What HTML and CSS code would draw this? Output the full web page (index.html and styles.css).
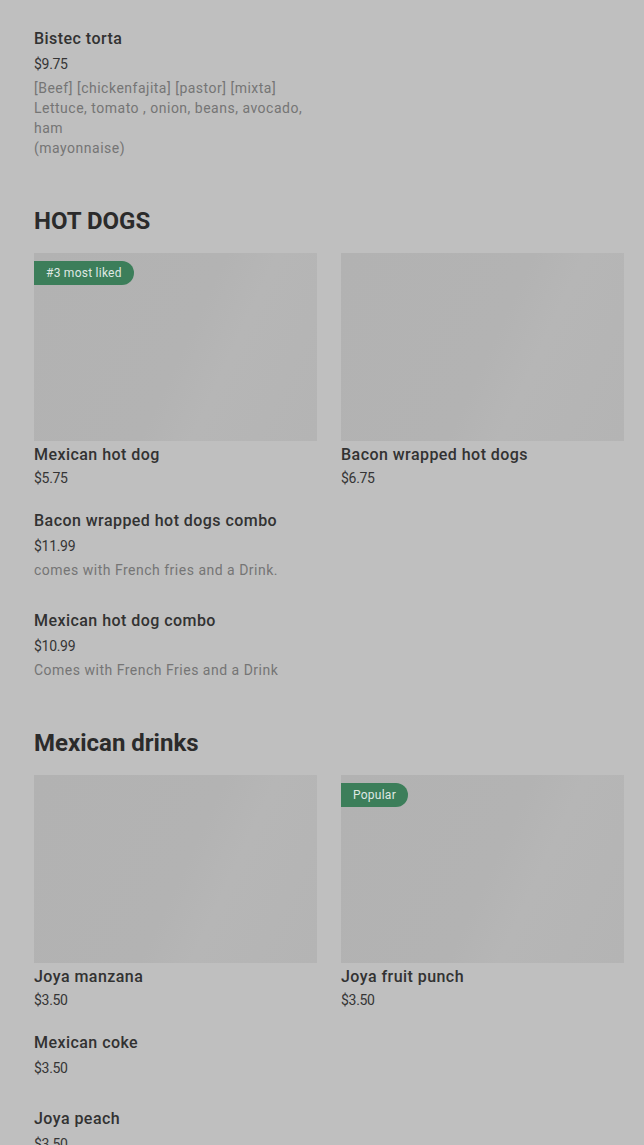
FILE: index.html
```html
<!DOCTYPE html>
<html lang="en">
<head>
<meta charset="utf-8">
<title>Menu</title>
<link rel="stylesheet" href="styles.css">
</head>
<body>
<main class="menu">
  <section class="section first">
    <div class="list">
      <div class="item">
        <div class="name">Bistec torta</div>
        <div class="price">$9.75</div>
        <div class="desc">[Beef] [chickenfajita] [pastor] [mixta]<br>Lettuce, tomato , onion, beans, avocado, ham<br>(mayonnaise)</div>
      </div>
    </div>
  </section>

  <section class="section">
    <h2 class="heading">HOT DOGS</h2>
    <div class="grid">
      <div class="card">
        <div class="thumb"><span class="badge">#3 most liked</span></div>
        <div class="card-name">Mexican hot dog</div>
        <div class="card-price">$5.75</div>
      </div>
      <div class="card">
        <div class="thumb"></div>
        <div class="card-name">Bacon wrapped hot dogs</div>
        <div class="card-price">$6.75</div>
      </div>
    </div>
    <div class="list">
      <div class="item">
        <div class="name">Bacon wrapped hot dogs combo</div>
        <div class="price">$11.99</div>
        <div class="desc">comes with French fries and a Drink.</div>
      </div>
      <div class="item">
        <div class="name">Mexican hot dog combo</div>
        <div class="price">$10.99</div>
        <div class="desc">Comes with French Fries and a Drink</div>
      </div>
    </div>
  </section>

  <section class="section">
    <h2 class="heading">Mexican drinks</h2>
    <div class="grid">
      <div class="card">
        <div class="thumb"></div>
        <div class="card-name">Joya manzana</div>
        <div class="card-price">$3.50</div>
      </div>
      <div class="card">
        <div class="thumb"><span class="badge">Popular</span></div>
        <div class="card-name">Joya fruit punch</div>
        <div class="card-price">$3.50</div>
      </div>
    </div>
    <div class="list">
      <div class="item">
        <div class="name">Mexican coke</div>
        <div class="price">$3.50</div>
      </div>
      <div class="item">
        <div class="name">Joya peach</div>
        <div class="price">$3.50</div>
      </div>
    </div>
  </section>
</main>
</body>
</html>
```

FILE: styles.css
```css
html, body {
  margin: 0;
  padding: 0;
  background: #bfbfbf;
}

body {
  font-family: Roboto, "Liberation Sans", Arial, sans-serif;
  color: #2f2f2f;
}

.menu {
  padding: 0 20px 0 34px;
  display: flex;
  flex-direction: column;
  gap: 47px;
}

.section.first {
  padding-top: 29px;
}

.section {
  display: flex;
  flex-direction: column;
}

.heading {
  margin: 0 0 16px;
  font-size: 24px;
  line-height: 32px;
  font-weight: 700;
  letter-spacing: 0;
  color: #2b2b2b;
}

.grid {
  display: grid;
  grid-template-columns: 283px 283px;
  column-gap: 24px;
  margin-bottom: 23px;
}

.thumb {
  position: relative;
  height: 188px;
  background: linear-gradient(115deg, #b2b2b2 0%, #b3b3b3 52%, #b6b6b6 66%, #b4b4b4 100%);
}

.badge {
  position: absolute;
  top: 8px;
  left: 0;
  height: 24px;
  line-height: 24px;
  padding: 0 12px;
  border-radius: 0 12px 12px 0;
  background: #3c7e5a;
  color: #dfe8e3;
  font-size: 12px;
  letter-spacing: 0.25px;
}

.card-name {
  margin-top: 4px;
  font-size: 16px;
  line-height: 20px;
  font-weight: 500;
  letter-spacing: 0.45px;
  color: #323232;
}

.card-price {
  margin-top: 3px;
  font-size: 14px;
  line-height: 20px;
  letter-spacing: -0.3px;
  color: #353535;
}

.list {
  display: flex;
  flex-direction: column;
  gap: 31px;
  width: 283px;
}

.name {
  font-size: 16px;
  line-height: 20px;
  font-weight: 500;
  letter-spacing: 0.45px;
  color: #323232;
}

.price {
  margin-top: 5px;
  font-size: 14px;
  line-height: 20px;
  letter-spacing: -0.3px;
  color: #353535;
}

.desc {
  margin-top: 4px;
  font-size: 14px;
  line-height: 20px;
  letter-spacing: 0.5px;
  color: #757575;
}
```
